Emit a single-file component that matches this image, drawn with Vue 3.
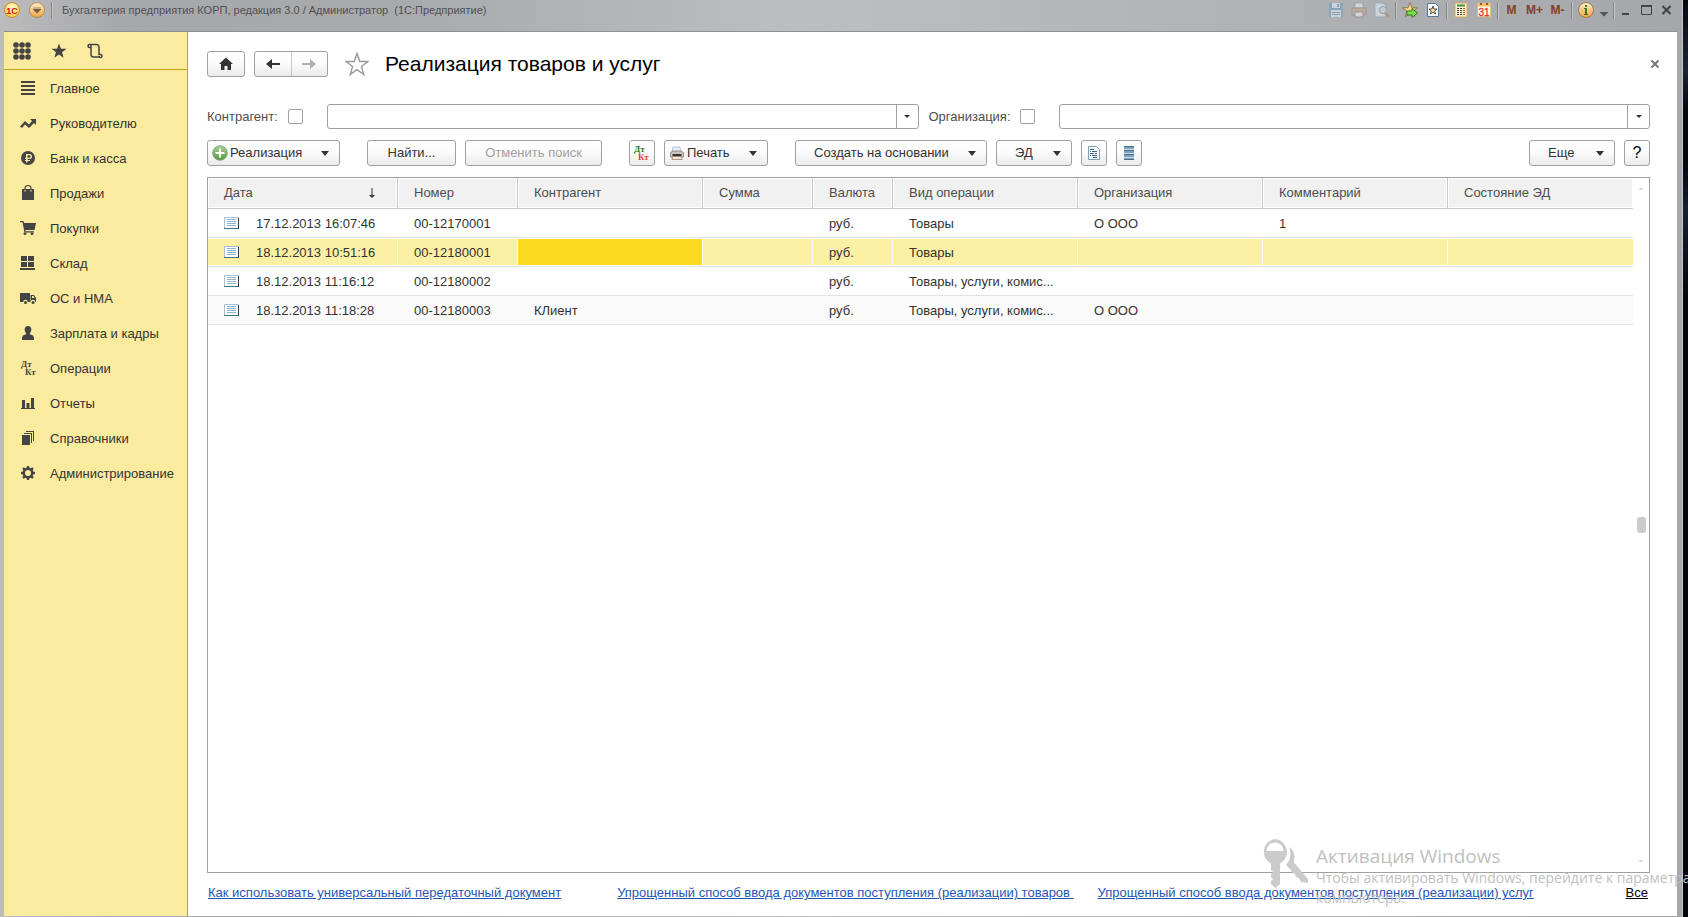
<script setup>
import { ref } from 'vue'

const nav = [
  { t: 'Главное', d: 'M1 1h14v2H1zM1 5h14v2H1zM1 9h14v2H1zM1 13h14v2H1z' },
  { t: 'Руководителю', d: 'M0 11.500 5 6l4 3.500L12 6l-2-2h6v6l-2-2-5 5-4-3.500-3 3.500z' },
  { t: 'Банк и касса', d: 'M8 1a7 7 0 1 0 0 14A7 7 0 0 0 8 1zM6 4h3.500a2.500 2.500 0 0 1 0 5H7.500v1H10v1H7.500v1.500H6V11H5v-1h1V9H5V7.800h1zM7.500 5.300v2.500H9.300a1.200 1.200 0 0 0 0-2.500z' },
  { t: 'Продажи', d: 'M2 4h2.500V3a3.500 3 0 0 1 7 0v1H14v11H2zM5.700 4h4.600V3a2.300 1.900 0 0 0-4.600 0zM4.500 5v1.500h1.200V5zM10.300 5v1.500h1.200V5z' },
  { t: 'Покупки', d: 'M0 1h3.500l.5 2h12l-1.500 7H5.200l.3 1.300H14v1.200H4.400L2.600 2.300H0zM3.500 13.500a1.500 1.500 0 1 0 3 0 1.500 1.500 0 0 0-3 0zM10.500 13.500a1.500 1.500 0 1 0 3 0 1.500 1.500 0 0 0-3 0z' },
  { t: 'Склад', d: 'M1 1h6v5H1zM8 1h6v5H8zM1 7h6v5H1zM8 7h6v5H8zM0 13h15v2H0z' },
  { t: 'ОС и НМА', d: 'M0 3h10v9H7.800a2.300 2.300 0 0 0-4.600 0H0zM10.500 5h3.500l2 3v4h-.700a2.300 2.300 0 0 0-4.600 0h-.2zM12 6v2h2.500L13.500 6zM4 12.500a1.500 1.500 0 1 0 3 0 1.500 1.500 0 0 0-3 0zM11.500 12.500a1.500 1.500 0 1 0 3 0 1.500 1.500 0 0 0-3 0z' },
  { t: 'Зарплата и кадры', d: 'M8 1c2.300 0 3.300 1.500 3.300 3.500S10 8 9.800 8.700c0 .8 1 1 2.200 1.300 1.500.5 2 1.500 2 5H2c0-3.500.5-4.500 2-5 1.200-.3 2.200-.5 2.200-1.300C6 8 4.700 6.500 4.700 4.500S5.700 1 8 1z' },
  { t: 'Операции', dk: true },
  { t: 'Отчеты', d: 'M2 5h3v8H2zM6.500 8h3v5h-3zM11 3h3v10h-3zM1 13h14v1H1z' },
  { t: 'Справочники', d: 'M2 5h8v10H2zM4 3h8v10h-1V4H4zM6 1h8v10h-1V2H6z' },
  { t: 'Администрирование', d: 'M7 1h2l.4 1.800 1.300.5 1.600-1 1.400 1.400-1 1.600.5 1.300L15 7v2l-1.800.4-.5 1.300 1 1.600-1.400 1.400-1.600-1-1.300.5L9 15H7l-.4-1.800-1.300-.5-1.600 1-1.400-1.400 1-1.600-.5-1.300L1 9V7l1.800-.4.5-1.300-1-1.600 1.400-1.400 1.600 1 1.300-.5zM8 5a3 3 0 1 0 0 6 3 3 0 0 0 0-6z' }
]

const appTitle = 'Бухгалтерия предприятия КОРП, редакция 3.0 / Администратор  (1С:Предприятие)'
const cols = ['Дата', 'Номер', 'Контрагент', 'Сумма', 'Валюта', 'Вид операции', 'Организация', 'Комментарий', 'Состояние ЭД']
const rows = [
  ['17.12.2013 16:07:46', '00-12170001', '', '', 'руб.', 'Товары', 'О ООО', '1', ''],
  ['18.12.2013 10:51:16', '00-12180001', '', '', 'руб.', 'Товары', '', '', ''],
  ['18.12.2013 11:16:12', '00-12180002', '', '', 'руб.', 'Товары, услуги, комис...', '', '', ''],
  ['18.12.2013 11:18:28', '00-12180003', 'КЛиент', '', 'руб.', 'Товары, услуги, комис...', 'О ООО', '', '']
]
const selected = ref(1)
const partner = ref('')
const org = ref('')
const star = 'M8 .5l1.900 5.300h5.600L11 9.200l1.700 5.500L8 11.400l-4.700 3.300L5 9.200.5 5.800h5.600z'
</script>

<template>
  <div class="desktop">
    <div class="window">
      <header class="titlebar">
        <svg class="logo" viewBox="0 0 16 16" aria-hidden="true">
          <defs>
            <radialGradient id="g-logo" cx=".5" cy=".3" r=".7"><stop offset="0" stop-color="#fffbd0" /><stop offset="1" stop-color="#f9c637" /></radialGradient>
            <linearGradient id="g-or" x2="0" y2="1"><stop offset="0" stop-color="#fff0cf" /><stop offset="1" stop-color="#f0a440" /></linearGradient>
          </defs>
          <circle cx="8" cy="8" r="7.500" fill="url(#g-logo)" stroke="#c98d3a" />
          <text x="8" y="11.500" text-anchor="middle" font-size="9" font-weight="700" fill="#d8141c">1С</text>
        </svg>
        <button class="menu" aria-label="Меню">
          <svg viewBox="0 0 16 16"><circle cx="8" cy="8" r="7.500" fill="url(#g-or)" stroke="#b98a50" /><path d="M3.500 7h9L8 11.500z" fill="#7a5a3c" /><path d="M4 5.500h8v1H4z" fill="#b08c60" /></svg>
        </button>
        <i class="sep"></i>
        <span class="app-title">{{ appTitle }}</span>
        <div class="tools">
          <button class="dim" aria-label="Сохранить"><svg viewBox="0 0 16 16"><path d="M1 1h14v14H1z" fill="#6fa0bd" /><path d="M4 1h8v5H4zM3 8h10v7H3z" fill="#dce9f0" /><path d="M9 2h2v3H9zM4 10h8v1H4zM4 12h8v1H4z" fill="#6f9ab5" /></svg></button>
          <button class="dim" aria-label="Печать"><svg viewBox="0 0 16 16"><path d="M4 1h8v5H4z" fill="#eef2f5" stroke="#999" /><path d="M1 6h14v7H1z" fill="#c4a994" stroke="#98857a" /><path d="M4 10h8v5H4z" fill="#eee" stroke="#8d8178" /></svg></button>
          <button class="dim" aria-label="Просмотр"><svg viewBox="0 0 16 16"><path d="M1 1h8l3 3v11H1z" fill="#dfe8ee" stroke="#86a9c0" /><circle cx="9" cy="8" r="3.500" fill="#cfe3ef" stroke="#7291a6" /><path d="M11 11l4 4" stroke="#b97a50" stroke-width="2" /></svg></button>
          <i class="sep"></i>
          <button aria-label="Добавить в избранное"><svg viewBox="0 0 16 16"><path :d="star" fill="#fbd98b" stroke="#8c7550" /><path d="M5 9h5V6.500l5.500 4.500-5.500 4.500V13H5z" fill="#7be04a" stroke="#2f7a1c" /></svg></button>
          <button aria-label="Избранное"><svg viewBox="0 0 16 16"><path d="M2.500 1.500h8l3 3v10h-11z" fill="#f4f9fc" stroke="#537896" /><path d="M8 4l1 3h3L9.700 9l.9 3L8 10.300 5.400 12l.9-3L4 7h3z" fill="#fbd98b" stroke="#333" stroke-width=".8" /></svg></button>
          <i class="sep"></i>
          <button aria-label="Калькулятор"><svg viewBox="0 0 16 16"><path d="M2 1h12v14H2z" fill="#fff3d2" stroke="#d7a757" /><path d="M4 2.500h8v2H4z" fill="#3f8f35" /><path d="M4 6h2v1H4zM7 6h2v1H7zM4 8h2v1H4zM7 8h2v1H7zM4 10h2v1H4zM7 10h2v1H7zM4 12h2v1H4zM7 12h2v1H7z" fill="#4a3a28" /><path d="M10 6h2v1h-2zM10 8h2v1h-2zM10 10h2v1h-2zM10 12h2v1h-2z" fill="#c04a2a" /></svg></button>
          <button aria-label="Календарь"><svg viewBox="0 0 16 16"><path d="M1.500 1.500h13v13h-13z" fill="#fff8ea" stroke="#e2bd7b" /><path d="M2 2h12v2.500H2z" fill="#f5c46a" /><path d="M4 1h2v2H4zM10 1h2v2h-2z" fill="#a8502c" /><text x="8" y="13.500" text-anchor="middle" font-size="10" fill="#e3301c" stroke="#e3301c" stroke-width=".3">31</text></svg></button>
          <i class="sep"></i>
          <button class="mem">M</button><button class="mem">M+</button><button class="mem">M-</button>
          <i class="sep"></i>
          <button aria-label="Справка"><svg viewBox="0 0 16 16"><circle cx="8" cy="8" r="7.500" fill="url(#g-or)" stroke="#a07a45" /><path d="M7 3h2v2H7zM6 6h3v6h1v1H6v-1h1V7H6z" fill="#3d7a1c" /></svg></button>
          <button class="slim" aria-label="Ещё"><svg viewBox="0 0 16 16"><path d="M3.500 10h9L8 14.500z" fill="#555" /></svg></button>
          <i class="sep"></i>
          <button class="win" aria-label="Свернуть"><svg viewBox="0 0 16 16"><path d="M4 11h7v2H4z" fill="#444" /></svg></button>
          <button class="win" aria-label="Развернуть"><svg viewBox="0 0 16 16"><path d="M3.500 4.500h10v8h-10z" fill="none" stroke="#444" /><path d="M3 3h11v2H3z" fill="#444" /></svg></button>
          <button class="win" aria-label="Закрыть"><svg viewBox="0 0 16 16"><path d="M4.500 4l8 8M12.500 4l-8 8" stroke="#444" stroke-width="2.200" /></svg></button>
        </div>
      </header>

      <div class="body">
        <aside>
          <div class="quick">
            <button aria-label="Разделы"><svg class="apps" viewBox="0 0 18 18"><template v-for="y in 3" :key="y"><circle v-for="x in 3" :key="x" :cx="x * 6 - 3" :cy="y * 6 - 3" r="2.800" /></template></svg></button>
            <button aria-label="Избранное"><svg viewBox="0 0 16 16"><path :d="star" /></svg></button>
            <button aria-label="История"><svg class="scroll" viewBox="0 0 16 16"><path d="M4 4.500H2.500a1.500 1.500 0 1 1 1.500-1.500V11.500a2.500 2.500 0 0 0 2.500 2.500h6.500M2.500 1.500H9.500A2.500 2.500 0 0 1 12 4v7.500h1.500a1.500 1.500 0 1 1-1.500 1.500" /></svg></button>
          </div>
          <nav>
            <a v-for="n in nav" :key="n.t" href="#">
              <svg viewBox="0 0 16 16" aria-hidden="true">
                <path v-if="n.d" :d="n.d" fill-rule="evenodd" />
                <g v-else class="dk"><text x="1" y="7">Дт</text><text x="5" y="15">Кт</text></g>
              </svg>
              <span>{{ n.t }}</span>
            </a>
          </nav>
        </aside>

        <main>
          <div class="head">
            <button class="btn home" aria-label="Домой"><svg viewBox="0 0 16 16"><path d="M8 1.500l7 6.500h-2v6H9.500v-4h-3v4H3V8H1z" fill="#333" /></svg></button>
            <div class="pair">
              <button aria-label="Назад"><svg viewBox="0 0 16 16"><path d="M1 8l6-5v4h8v2H7v4z" fill="#333" /></svg></button>
              <button aria-label="Вперёд"><svg viewBox="0 0 16 16"><path d="M15 8L9 3v4H1v2h8v4z" fill="#b0b0b0" /></svg></button>
            </div>
            <button class="fav" aria-label="В избранное"><svg viewBox="0 0 24 24"><path d="M12 1.500l2.800 8h8.200l-6.600 5 2.400 8L12 17.700 5.200 22.500l2.400-8L1 9.500h8.200z" fill="#fff" stroke="#999" stroke-width="1.400" /></svg></button>
            <h1>Реализация товаров и услуг</h1>
            <button class="close" aria-label="Закрыть форму"><svg viewBox="0 0 10 10"><path d="M1.500 1.500l7 7M8.500 1.500l-7 7" stroke="#777" stroke-width="2" /></svg></button>
          </div>

          <div class="filters">
            <div class="filter">
              <label for="c1">Контрагент:</label><input id="c1" type="checkbox">
              <div class="combo"><input v-model="partner" type="text" aria-label="Контрагент"><button aria-label="Выбрать контрагента"><i class="caret small"></i></button></div>
            </div>
            <div class="filter">
              <label for="c2" class="wide">Организация:</label><input id="c2" type="checkbox">
              <div class="combo"><input v-model="org" type="text" aria-label="Организация"><button aria-label="Выбрать организацию"><i class="caret small"></i></button></div>
            </div>
          </div>

          <div class="toolbar">
            <button class="btn create">
              <svg viewBox="0 0 16 16"><defs><linearGradient id="g-gr" x2="0" y2="1"><stop offset="0" stop-color="#a9cf90" /><stop offset="1" stop-color="#4f9a38" /></linearGradient></defs><circle cx="8" cy="8" r="7.300" fill="url(#g-gr)" stroke="#8fa785" /><path d="M7 3.500h2V7h3.500v2H9v3.500H7V9H3.500V7H7z" fill="#fff" /></svg>
              <span>Реализация</span><i class="caret"></i></button>
            <button class="btn find">Найти...</button>
            <button class="btn cancel" disabled>Отменить поиск</button>
            <button class="btn sq" aria-label="Дт Кт"><svg viewBox="0 0 16 16" class="dk"><text x="0" y="7" fill="#1d7a0c">Дт</text><text x="4" y="15" fill="#f03a3a">Кт</text></svg></button>
            <button class="btn print">
              <svg viewBox="0 0 16 16"><path d="M4 2h7l1 5H3z" fill="#e4eef6" stroke="#a9b8c4" stroke-width=".8" /><path d="M1.500 7.500L4 6h8l2.500 1.500V12h-13z" fill="#c9c5c1" stroke="#857d77" stroke-width=".8" /><path d="M3.500 9h9v2h-9z" fill="#333" /><path d="M3.500 11.500h9l.5 3H3z" fill="#f1e6dc" stroke="#a5836c" stroke-width=".8" /></svg>
              <span>Печать</span><i class="caret"></i></button>
            <button class="btn based"><span>Создать на основании</span><i class="caret"></i></button>
            <button class="btn ed"><span>ЭД</span><i class="caret"></i></button>
            <button class="btn sq" aria-label="Документ"><svg viewBox="0 0 16 16"><path d="M2.500 1.500h8l3 3v10h-11z" fill="#f5fafd" stroke="#7fa0b6" /><path d="M4 4h4v1H4zM6 6h5v1H6zM4 6h1v1H4zM4 8h4v1H4zM9 8h2v1H9zM6 10h5v1H6zM4 10h1v1H4zM7 12h4v1H7z" fill="#3c6484" /></svg></button>
            <button class="btn sq" aria-label="Реестр"><svg viewBox="0 0 16 16"><path d="M3 1h10v14H3z" fill="#7fa1ba" /><path d="M3 4h10v1H3zM3 8h10v1H3zM3 12h10v1H3z" fill="#c9dbe7" /><path d="M3 1h10v1H3zM3 5h10v1H3zM3 9h10v1H3zM3 14h10v1H3z" fill="#48708e" /></svg></button>
            <button class="btn more"><span>Еще</span><i class="caret"></i></button>
            <button class="btn sq help">?</button>
          </div>

          <div class="grid">
            <div class="table-area">
              <table>
                <colgroup><col class="c-date"><col class="c-num"><col><col class="c-sum"><col class="c-cur"><col><col><col><col></colgroup>
                <thead><tr><th v-for="(c, i) in cols" :key="c" scope="col"><div><span>{{ c }}</span>
                  <svg v-if="i === 0" viewBox="0 0 8 12"><path d="M3.500 1h1v7H7l-3 3-3-3h2.500z" fill="#333" /></svg></div></th></tr></thead>
                <tbody>
                  <tr v-for="(r, ri) in rows" :key="ri" :class="{ sel: ri === selected }" @click="selected = ri">
                    <td v-for="(c, ci) in r" :key="ci" :class="{ cur: ri === selected && ci === 2 }">
                      <div><svg v-if="ci === 0" viewBox="0 0 15 12"><path d="M.5.5h14v11H.5z" fill="#fff" stroke="#a9c0d2" /><path d="M0 11h15v1H0z" fill="#3f7480" /><path d="M14 1h1v11h-1z" fill="#2b3c50" /><path d="M3 2.500h9M3 4.500h9M3 6.500h9M3 8.500h9" stroke="#90b3d0" /></svg><span>{{ c }}</span></div>
                    </td>
                  </tr>
                </tbody>
              </table>
            </div>
            <div class="rail"><i class="up"></i><i class="thumb"></i><i class="down"></i></div>
          </div>

          <footer>
            <a href="#" class="l1">Как использовать универсальный передаточный документ</a>
            <a href="#" class="l2">Упрощенный способ ввода документов поступления (реализации) товаров&nbsp;</a>
            <a href="#">Упрощенный способ ввода документов поступления (реализации) услуг</a>
            <a href="#" class="all">Все</a>
          </footer>
        </main>
      </div>
    </div>

    <div class="watermark">
      <svg viewBox="0 0 48 50" fill="#cbcbcb"><path fill-rule="evenodd" d="M13 0a13 13 0 0 1 5 24.500V45l-4.500 4L9 45v-3l2-2-2-2v-3l2-2-2-2v-6.500A13 13 0 0 1 13 0zM4.500 12h17a8.500 8.500 0 0 0-17 0z" /><path d="M27 8c5 3 7 10 4.500 15L46 40v4l-7-1-2-4-3-1-1-3-3-1-1-3-5-5c4-4 6-11 3-18z" /></svg>
      <div><strong>Активация Windows</strong><p>Чтобы активировать Windows, перейдите к параметрам<br>компьютера.</p></div>
    </div>
  </div>
</template>

<style>
html, body { margin: 0; background: #03060f; }
</style>

<style scoped>
* { box-sizing: border-box; }
.desktop { position: relative; display: flex; min-height: 100vh; padding-right: 5px; overflow: hidden; background: linear-gradient(#050911, #1a2434 70px, #04070f 110px, #02050d 160px, #152030 210px, #02050d 300px); font: 13px/16px "Liberation Sans", Arial, sans-serif; color: #333; }
button { font: inherit; color: inherit; padding: 0; margin: 0; border: 0; background: none; display: flex; align-items: center; justify-content: center; }
svg { width: 16px; height: 16px; flex: none; display: block; }
.window { flex: 1; min-width: 0; display: flex; flex-direction: column; padding: 0 5px 1px 4px; background: linear-gradient(90deg, #bcbcbd, #a7a8aa 120px, #a9aaac 400px, #bdbec0 800px, #a6a7aa); border-right: 1px solid #c8c8c8; }
.titlebar { height: 31px; display: flex; align-items: center; padding: 0 1px 11px 0; }
.menu { margin-left: 9px; }
.titlebar .sep { width: 1px; height: 17px; background: #85868a; margin: 0 2px; box-shadow: 1px 0 #c3c4c6; }
.titlebar > .sep { margin-left: 6px; }
.app-title { margin-left: 8px; font-size: 11px; color: #505155; white-space: pre; }
.tools { display: flex; align-items: center; margin-left: auto; }
.tools button { width: 23px; }
.tools .dim { opacity: .6; }
.tools .slim { width: 14px; }
.tools .win { width: 20px; }
.tools .mem { font-weight: 700; font-size: 12px; color: #7d4322; }
.body { flex: 1; display: flex; min-height: 0; border-top: 1px solid #8f9093; }
aside { width: 184px; flex: none; background: #fbeb9e; border-right: 1px solid #bfa716; }
.quick { height: 38px; display: flex; align-items: center; padding-left: 9px; gap: 20px; border-bottom: 1px solid #bfa716; }
.quick svg { fill: #444; }
.quick .apps { width: 18px; height: 18px; }
.quick .scroll { fill: none; stroke: #444; stroke-width: 1.5px; }
nav { display: flex; flex-direction: column; }
nav a { height: 35px; display: flex; align-items: center; gap: 14px; padding-left: 16px; color: #333; text-decoration: none; white-space: nowrap; }
nav span, td span { padding-top: 2px; }
nav svg { fill: #444; }
.dk { font: 700 9px "Liberation Serif", serif; }
main { flex: 1; min-width: 0; display: flex; flex-direction: column; background: #fff; padding: 19px 27px 15px 19px; }
.btn, .pair { height: 26px; border: 1px solid #a0a0a0; border-radius: 3px; background: linear-gradient(#fff, #fdfdfd 40%, #ebebeb); white-space: nowrap; }
.head { display: flex; align-items: center; height: 26px; }
.home { width: 38px; margin-right: 9px; }
.pair { display: flex; width: 74px; }
.pair button { flex: 1; }
.pair button + button { border-left: 1px solid #c8c8c8; }
.fav { margin: 0 16px 0 17px; }
.fav svg { width: 24px; height: 24px; }
h1 { margin: 0; font-size: 21px; line-height: 26px; font-weight: 400; color: #000; }
.close { margin-left: auto; margin-right: -10px; width: 10px; }
.close svg { width: 10px; height: 10px; }
.filters { display: flex; gap: 10px; margin-top: 27px; }
.filter { flex: 1 1 auto; display: flex; align-items: center; color: #4d4d4d; }
.filter label { width: 81px; }
.filter label.wide { width: 91px; }
.filter input[type="checkbox"] { appearance: none; width: 15px; height: 15px; margin: 0 24px 0 0; border: 1px solid #a0a0a0; border-radius: 2px; background: #fff; flex: none; }
.combo { flex: 1; min-width: 0; height: 25px; display: flex; border: 1px solid #a0a0a0; border-radius: 3px; }
.combo input { flex: 1; min-width: 0; border: 0; padding: 0 6px; background: none; font: inherit; outline: 0; }
.combo button { width: 22px; border-left: 1px solid #a0a0a0; }
.caret { border: 4px solid transparent; border-top: 5px solid #333; border-bottom: 0; flex: none; }
.caret.small { border-width: 3px 3px 0; }
.toolbar { display: flex; gap: 9px; margin-top: 11px; }
.toolbar .caret { margin-left: auto; }
.create { width: 133px; padding: 0 10px 0 4px; gap: 2px; }
.find { width: 89px; margin-left: 18px; }
.cancel { width: 137px; color: #a0a0a0; }
.sq { width: 26px; }
.cancel + .sq { margin-left: 18px; }
.print { width: 104px; padding: 0 10px 0 4px; gap: 2px; }
.based { width: 192px; padding: 0 10px 0 18px; margin-left: 18px; }
.ed { width: 76px; padding: 0 10px 0 18px; }
.more { width: 86px; padding: 0 10px 0 18px; margin-left: auto; }
.help { font-size: 16px; color: #000; }
.grid { flex: 1; margin-top: 11px; border: 1px solid #a0a0a0; display: flex; min-height: 0; }
.table-area { flex: 1; min-width: 0; }
table { width: 100%; table-layout: fixed; border-collapse: separate; border-spacing: 0; }
.c-date { width: 190px; } .c-num { width: 120px; } .c-sum { width: 110px; } .c-cur { width: 80px; }
th, td { padding: 0; text-align: left; font-weight: 400; overflow: hidden; white-space: nowrap; }
th { height: 31px; color: #4d4d4d; border-bottom: 1px solid #c8c8c8; border-right: 1px solid #c8c8c8; padding: 1px; }
th:last-child { border-right: 0; }
th div { height: 28px; background: #f1f1f1; display: flex; align-items: center; justify-content: space-between; padding: 0 20px 0 15px; }
th svg { width: 8px; height: 12px; }
td { height: 29px; border-bottom: 1px solid #e4e4e4; }
td div { height: 26px; margin: 1px 1px 1px 0; padding: 0 0 0 16px; display: flex; align-items: center; }
td:last-child div { margin-right: 0; }
td svg { width: 15px; height: 12px; margin-right: 17px; }
tr:nth-child(4) td { background: #fafafa; }
.sel div { background: #fcf0a4; }
.sel .cur div { background: #fcda20; }
.rail { width: 16px; display: flex; flex-direction: column; align-items: center; justify-content: space-between; padding: 9px 0; }
.thumb { width: 9px; height: 16px; border-radius: 3px; background: #cbcbcb; }
.up { border: 3px solid transparent; border-top: 0; border-bottom-color: #ddd; }
.down { border: 3px solid transparent; border-bottom: 0; border-top-color: #ddd; }
footer { display: flex; align-items: center; margin-top: 12px; padding: 0 2px 0 1px; white-space: nowrap; }
footer a { color: #1f55b5; }
.l1 { margin-right: 56px; }
.l2 { margin-right: 24px; }
footer .all { color: #000; margin-left: auto; }
.watermark { position: absolute; right: 0; bottom: 9px; width: 426px; height: 69px; overflow: hidden; display: flex; gap: 6px; color: #bfbfbf; pointer-events: none; font-family: "Open Sans", sans-serif; white-space: nowrap; }
.watermark svg { width: 48px; height: 50px; }
.watermark div { padding-top: 5px; }
.watermark strong { display: block; font-weight: 400; font-size: 19px; line-height: 24px; }
.watermark p { margin: 0; font-size: 14px; line-height: 20px; }
</style>
